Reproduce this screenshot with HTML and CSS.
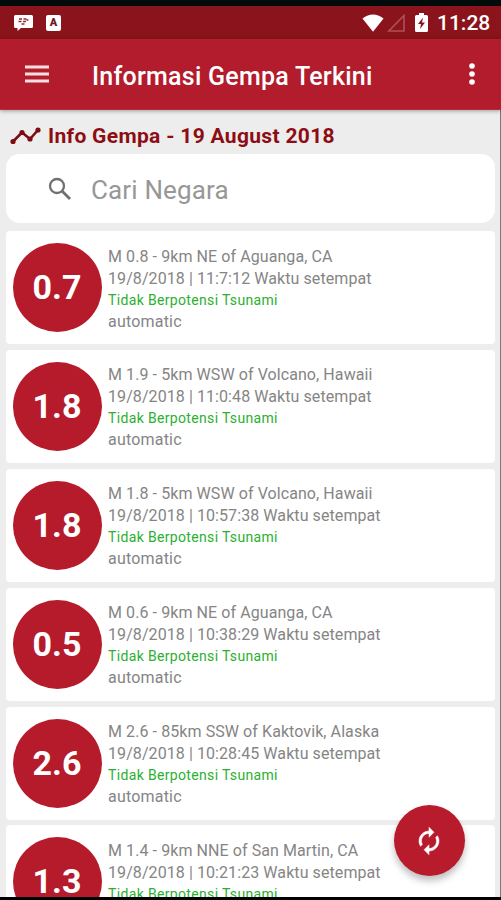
FILE: index.html
```html
<!DOCTYPE html>
<html lang="id">
<head>
  <meta charset="UTF-8" />
  <meta name="viewport" content="width=device-width, initial-scale=1.0"/>
  <title>Informasi Gempa Terkini</title>
  <link rel="stylesheet" href="styles.css">
</head>
<body>
<div class="screen">

  <div class="statusbar">
    <div class="left">
      <svg width="19" height="16" viewBox="0 0 19 16">
        <path d="M1.500 0h16q1.500 0 1.500 1.500v10q0 1.500-1.500 1.500H7l-3.500 3v-3h-2Q0 13 0 11.500v-10Q0 0 1.500 0z" fill="#fff"/>
        <path d="M5 4h3M9.500 4h3M4.500 6.500h3M9 6.500h3M12.500 5h2M7.500 9h3" stroke="#8a2a32" stroke-width="1.400"/>
      </svg>
      <div class="app-badge">A</div>
    </div>
    <div class="right">
      <svg class="wifi" width="22" height="18" viewBox="0 0 24 19"><path d="M12 19L.5 4.500Q12-4 23.500 4.500z" fill="#fff"/></svg>
      <svg class="signal" width="18" height="18" viewBox="0 0 18 18"><path d="M1.800 17H17V1.500z" fill="none" stroke="#b0505a" stroke-width="1.600"/></svg>
      <svg class="battery" width="13" height="19" viewBox="0 0 13 19">
        <path d="M4 0h5v2h2.500Q13 2 13 3.500v14q0 1.500-1.500 1.500h-10Q0 19 0 17.500v-14Q0 2 1.500 2H4z" fill="#fff"/>
        <path d="M8 4.500L3 11h3l-1 5 5-6.500H7z" fill="#8b131b"/>
      </svg>
      <span class="clock">11:28</span>
    </div>
  </div>

  <div class="navbar">
    <svg class="menu" width="24" height="18" viewBox="0 0 24 18"><path d="M0 2h24M0 9h24M0 16h24" stroke="#fbdfe2" stroke-width="3"/></svg>
    <h1>Informasi Gempa Terkini</h1>
    <svg class="more" width="6" height="22" viewBox="0 0 6 22" fill="#fff"><circle cx="3" cy="3" r="2.800"/><circle cx="3" cy="11" r="2.800"/><circle cx="3" cy="19" r="2.800"/></svg>
  </div>

  <div class="content">
    <h2>
      <svg width="31" height="18" viewBox="0 0 31 18">
        <path d="M3 14.500L12 5.500l8 6.500L28 3" fill="none" stroke="#7d0c12" stroke-width="2.600"/>
        <g fill="#7d0c12"><circle cx="3" cy="14.500" r="2.600"/><circle cx="12" cy="5.500" r="2.600"/><circle cx="20" cy="12" r="2.600"/><circle cx="28" cy="3" r="2.600"/></g>
      </svg>
      <span>Info Gempa - 19 August 2018</span>
    </h2>

    <div class="search">
      <svg width="24" height="24" viewBox="0 0 24 24"><circle cx="9" cy="9" r="7" fill="none" stroke="#707070" stroke-width="2.300"/><path d="M14 14l8 8" stroke="#707070" stroke-width="2.900"/></svg>
      <input type="text" placeholder="Cari Negara"/>
    </div>

    <div class="card">
      <div class="mag">0.7</div>
      <div class="detail">
        <div class="place">M 0.8 - 9km NE of Aguanga, CA</div>
        <div class="time">19/8/2018 | 11:7:12 Waktu setempat</div>
        <div class="tsunami">Tidak Berpotensi Tsunami</div>
        <div class="status">automatic</div>
      </div>
    </div>
    <div class="card">
      <div class="mag">1.8</div>
      <div class="detail">
        <div class="place">M 1.9 - 5km WSW of Volcano, Hawaii</div>
        <div class="time">19/8/2018 | 11:0:48 Waktu setempat</div>
        <div class="tsunami">Tidak Berpotensi Tsunami</div>
        <div class="status">automatic</div>
      </div>
    </div>
    <div class="card">
      <div class="mag">1.8</div>
      <div class="detail">
        <div class="place">M 1.8 - 5km WSW of Volcano, Hawaii</div>
        <div class="time">19/8/2018 | 10:57:38 Waktu setempat</div>
        <div class="tsunami">Tidak Berpotensi Tsunami</div>
        <div class="status">automatic</div>
      </div>
    </div>
    <div class="card">
      <div class="mag">0.5</div>
      <div class="detail">
        <div class="place">M 0.6 - 9km NE of Aguanga, CA</div>
        <div class="time">19/8/2018 | 10:38:29 Waktu setempat</div>
        <div class="tsunami">Tidak Berpotensi Tsunami</div>
        <div class="status">automatic</div>
      </div>
    </div>
    <div class="card">
      <div class="mag">2.6</div>
      <div class="detail">
        <div class="place">M 2.6 - 85km SSW of Kaktovik, Alaska</div>
        <div class="time">19/8/2018 | 10:28:45 Waktu setempat</div>
        <div class="tsunami">Tidak Berpotensi Tsunami</div>
        <div class="status">automatic</div>
      </div>
    </div>
    <div class="card">
      <div class="mag">1.3</div>
      <div class="detail">
        <div class="place">M 1.4 - 9km NNE of San Martin, CA</div>
        <div class="time">19/8/2018 | 10:21:23 Waktu setempat</div>
        <div class="tsunami">Tidak Berpotensi Tsunami</div>
        <div class="status">automatic</div>
      </div>
    </div>
  </div>

  <button class="fab" aria-label="Refresh">
    <svg width="30" height="30" viewBox="0 0 24 24" fill="#fff" stroke="#fff" stroke-width=".4"><path d="M12 6v3l4-4-4-4v3c-4.420 0-8 3.580-8 8 0 1.570.46 3.030 1.240 4.260L6.700 14.800c-.45-.83-.7-1.790-.7-2.800 0-3.310 2.690-6 6-6zm6.760 1.740L17.300 9.200c.44.840.7 1.790.7 2.800 0 3.310-2.690 6-6 6v-3l-4 4 4 4v-3c4.420 0 8-3.580 8-8 0-1.570-.46-3.030-1.240-4.260z"/></svg>
  </button>
</div>
</body>
</html>
```
FILE: styles.css
```css
* {
  box-sizing: border-box;
}
body {
  margin: 0;
  background: #000;
  font-family: Roboto, "Liberation Sans", sans-serif;
  overflow: hidden;
}
.screen {
  position: relative;
  display: flex;
  flex-direction: column;
  height: 900px;
  border-top: 6px solid #020b0a;
  border-bottom: 3px solid #000;
  background: #ededed;
  overflow: hidden;
}
.screen::after {
  content: "";
  position: absolute;
  top: 103px;
  right: 0;
  bottom: 0;
  width: 1px;
  background: #777;
}
.statusbar {
  display: flex;
  flex: none;
  justify-content: space-between;
  height: 33px;
  padding: 0 11px 0 14px;
  background: #8b131b;
  color: #fff;
}
.statusbar .left,
.statusbar .right {
  display: flex;
  align-items: center;
}
.statusbar .left {
  gap: 13px;
}
.app-badge {
  width: 15px;
  height: 16px;
  border-radius: 2px;
  background: #fff;
  color: #701820;
  font-size: 11px;
  font-weight: 900;
  line-height: 16px;
  text-align: center;
}
.signal {
  margin: 0 10px 0 3px;
}
.clock {
  width: 53px;
  margin-left: 9px;
  font-size: 21px;
  font-weight: 500;
  white-space: nowrap;
}
.navbar {
  display: flex;
  flex: none;
  align-items: center;
  height: 71px;
  padding: 0 26px 0 25px;
  background: #b21c2c;
  border-bottom: 1px solid #c02a38;
  box-shadow: 0 1px 4px rgba(0,0,0,0.35);
  color: #fff;
  z-index: 1;
}
.navbar h1 {
  flex: 1;
  margin: 4px 0 0 43px;
  font-size: 25px;
  font-weight: 500;
  letter-spacing: 0.25px;
  white-space: nowrap;
}
.content {
  flex: none;
  padding: 0 6px;
}
h2 {
  display: flex;
  align-items: center;
  height: 44px;
  margin: 0;
  padding: 7px 0 0 4px;
  color: #8d0d14;
  font-size: 21px;
  font-weight: 700;
  letter-spacing: 0.32px;
}
h2 span {
  margin-left: 7px;
}
.search {
  display: flex;
  align-items: center;
  height: 69px;
  margin-bottom: 8px;
  padding-left: 42px;
  border-radius: 14px;
  background: #fff;
}
.search input {
  width: 300px;
  margin-left: 19px;
  padding: 3px 0 0;
  border: none;
  outline: none;
  background: none;
  font-family: inherit;
  font-size: 26px;
  letter-spacing: 0.15px;
}
.search input::placeholder {
  color: #979797;
}
.card {
  display: flex;
  height: 113px;
  margin-bottom: 5.9px;
  padding: 12px 6px;
  border-radius: 4px;
  background: #fff;
}
.mag {
  width: 89px;
  height: 89px;
  margin-left: 0.5px;
  border-radius: 50%;
  background: #b51b2b;
  color: #fff;
  font-size: 34px;
  font-weight: 700;
  line-height: 88px;
  text-align: center;
}
.detail {
  margin: 2.5px 0 0 6.5px;
  color: #858585;
  font-size: 16px;
  line-height: 22px;
  letter-spacing: 0.08px;
  white-space: nowrap;
}
.tsunami {
  color: #2bb02f;
  font-size: 14px;
  line-height: 21px;
  letter-spacing: 0.34px;
}
.status {
  line-height: 21px;
  letter-spacing: 0.2px;
}
.fab {
  position: absolute;
  right: 36.5px;
  bottom: 21px;
  display: flex;
  align-items: center;
  justify-content: center;
  width: 71px;
  height: 71px;
  padding: 0;
  border: none;
  border-radius: 50%;
  background: #b81b2b;
  box-shadow: 0 5px 7px rgba(0,0,0,0.25);
  cursor: pointer;
}
```
